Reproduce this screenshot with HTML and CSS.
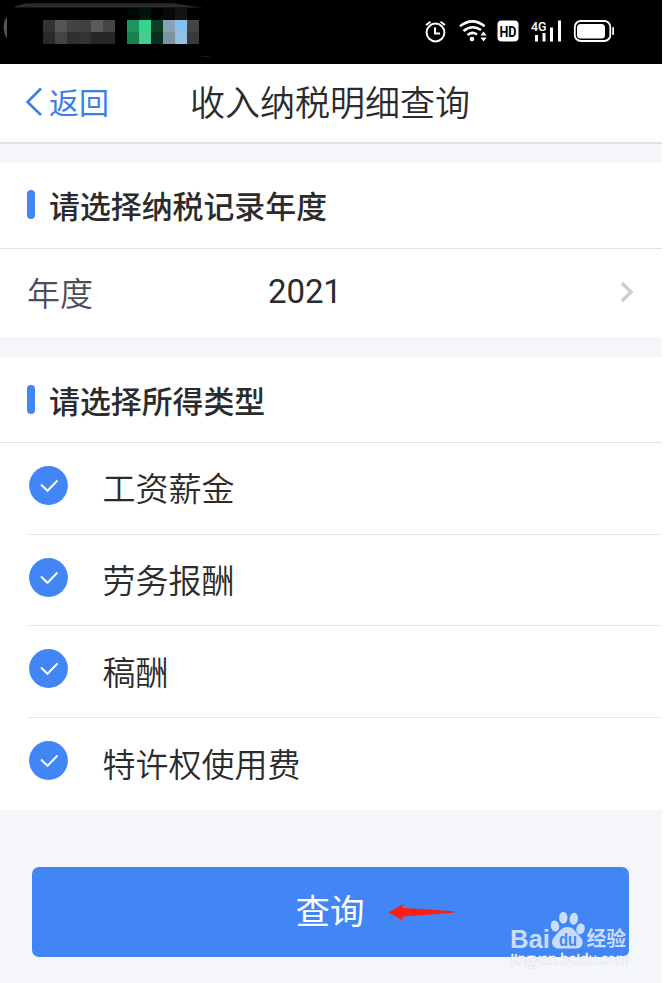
FILE: index.html
```html
<!DOCTYPE html>
<html lang="zh-CN">
<head>
<meta charset="utf-8">
<title>收入纳税明细查询</title>
<link rel="stylesheet" href="styles.css">
</head>
<body>
<div class="screen">
  <header class="status">
    <svg width="662" height="64" viewBox="0 0 662 64">
      <path d="M14 7.5Q20 3.5 29 3.3H174Q188 6 204 7.5Z" fill="#2b2b2b"/>
      <path d="M7 16Q0 27 7 39Z" fill="#555"/>
      <path d="M200 56.5q6-1.5 11 0z" fill="#333"/>
      <g shape-rendering="crispEdges">
        <path d="M43 20h12v12H43z" fill="#333"/><path d="M55 20h12v12H55z" fill="#555"/><path d="M67 20h12v12H67z" fill="#444"/><path d="M79 20h12v12H79z" fill="#404040"/><path d="M91 20h12v12H91z" fill="#5a5a5a"/><path d="M103 20h12v12h-12z" fill="#444"/>
        <path d="M43 32h12v12H43z" fill="#292929"/><path d="M55 32h12v12H55z" fill="#444"/><path d="M67 32h12v12H67z" fill="#303030"/><path d="M79 32h12v12H79z" fill="#333"/><path d="M91 32h24v12H91z" fill="#272727"/>
        <path d="M127 8h12v12h-12z" fill="#000604"/><path d="M139 8h12v12h-12z" fill="#03130c"/><path d="M163 8h12v12h-12z" fill="#090909"/><path d="M175 8h12v12h-12z" fill="#141414"/>
        <path d="M127 20h12v12h-12z" fill="#229263"/><path d="M139 20h12v12h-12z" fill="#37d48b"/><path d="M151 20h12v12h-12z" fill="#0e3d2a"/><path d="M163 20h12v12h-12z" fill="#8aa0b9"/><path d="M175 20h12v12h-12z" fill="#87c0ef"/><path d="M187 20h12v12h-12z" fill="#444"/>
        <path d="M127 32h12v12h-12z" fill="#16834f"/><path d="M139 32h12v12h-12z" fill="#47cb90"/><path d="M151 32h12v12h-12z" fill="#09301f"/><path d="M163 32h12v12h-12z" fill="#8093a2"/><path d="M175 32h12v12h-12z" fill="#91c1e3"/><path d="M187 32h12v12h-12z" fill="#393939"/>
      </g>
      <g fill="none" stroke="#fff">
        <circle cx="435.5" cy="32.5" r="8.900" stroke-width="2"/>
        <path d="M435 27.500v6h5" stroke-width="2"/>
        <path d="M426 25l4.500-3.300M445 25l-4.500-3.300" stroke-width="2"/>
        <path d="M460 26.300Q472.300 16.500 484.700 26.300" stroke-width="2.600"/>
        <path d="M463.500 31Q472.300 24 481 30" stroke-width="2.600"/>
        <path d="M467.500 35Q472 31 477 34.500" stroke-width="2.600"/>
      </g>
      <g fill="#fff">
        <circle cx="472" cy="39" r="2.300"/>
        <path d="M480.500 35.500l3-4 3.200 4zM480.500 37.500l3 4 3.200-4z"/>
        <rect x="497.500" y="20.500" width="21" height="21" rx="4"/>
        <rect x="535" y="35" width="3" height="6.500"/>
        <rect x="542.500" y="33" width="3" height="8.500"/>
        <rect x="550" y="27.500" width="3" height="14"/>
        <rect x="558" y="20.500" width="3" height="21"/>
        <rect x="577" y="24" width="28" height="14.500" rx="3.500"/>
        <rect x="612.300" y="27" width="1.700" height="8" rx="0.800"/>
      </g>
      <rect x="574.800" y="21" width="35.500" height="20" rx="6" fill="none" stroke="#fff" stroke-width="1.800"/>
      <text class="hd" x="508" y="36.500" text-anchor="middle" textLength="17" lengthAdjust="spacingAndGlyphs">HD</text>
      <text class="net" x="531" y="31" textLength="15.500" lengthAdjust="spacingAndGlyphs">4G</text>
    </svg>
  </header>

  <nav class="nav">
    <a class="back">
      <svg width="18" height="30" viewBox="0 0 18 30"><path d="M16 2.500L2.500 16 16 29" fill="none" stroke="#3d7fe8" stroke-width="2.600"/></svg>
      <span>返回</span>
    </a>
    <h1 class="title">收入纳税明细查询</h1>
  </nav>

  <section class="panel">
    <h2 class="head"><span class="bar"></span><span class="text">请选择纳税记录年度</span></h2>
    <div class="year">
      <span class="label">年度</span>
      <span class="value">2021</span>
      <svg class="chevron" width="16" height="22" viewBox="0 0 16 22"><path d="M3 2l9 9-9 9" fill="none" stroke="#cfcfd3" stroke-width="3.600"/></svg>
    </div>
  </section>

  <section class="panel">
    <h2 class="head types"><span class="bar"></span><span class="text">请选择所得类型</span></h2>
    <ul class="list">
      <li><svg class="check" viewBox="0 0 39 39"><circle cx="19.500" cy="19.500" r="19.400"/><path d="M12 18.500l6.500 6.300L28.500 14.500"/></svg><span>工资薪金</span></li>
      <li><svg class="check" viewBox="0 0 39 39"><circle cx="19.500" cy="19.500" r="19.400"/><path d="M12 18.500l6.500 6.300L28.500 14.500"/></svg><span>劳务报酬</span></li>
      <li><svg class="check" viewBox="0 0 39 39"><circle cx="19.500" cy="19.500" r="19.400"/><path d="M12 18.500l6.500 6.300L28.500 14.500"/></svg><span>稿酬</span></li>
      <li><svg class="check" viewBox="0 0 39 39"><circle cx="19.500" cy="19.500" r="19.400"/><path d="M12 18.500l6.500 6.300L28.500 14.500"/></svg><span>特许权使用费</span></li>
    </ul>
  </section>

  <button class="submit">查询</button>

  <svg class="arrow" width="68" height="20" viewBox="0 0 68 20"><path d="M.5 10.300L16 1.800l-2.500 4L65.500 9.200q1 .7 0 1.500L13.500 14.800l2.500 4.500z" fill="#fb1e12"/></svg>

  <svg class="watermark" width="150" height="66" viewBox="0 0 150 66">
    <g fill="#c9dcfc">
      <text class="bai" x="8" y="38" textLength="40" lengthAdjust="spacingAndGlyphs">Bai</text>
      <g transform="translate(-4 0)">
        <ellipse cx="57" cy="16" rx="4.200" ry="5.500" transform="rotate(-12 57 16)"/>
        <ellipse cx="65.300" cy="7.800" rx="4.200" ry="6"/>
        <ellipse cx="75.800" cy="8.800" rx="4.200" ry="6" transform="rotate(8 75.800 8.800)"/>
        <ellipse cx="82.500" cy="18.800" rx="4.200" ry="5.500" transform="rotate(12 82.500 18.800)"/>
        <path d="M69.500 17c6 0 8 5 12 9 6 6 3 12.500-3.500 12.500H61c-7 0-9.500-7-4-12.500 4-4 6.500-9 12.500-9z"/>
      </g>
      <text class="cn" x="84.500" y="36" textLength="39.500" lengthAdjust="spacingAndGlyphs">经验</text>
    </g>
    <text class="du" x="57" y="35.500" textLength="18" lengthAdjust="spacingAndGlyphs">du</text>
    <text class="url" x="8.500" y="54" textLength="118" lengthAdjust="spacingAndGlyphs">jingyan.baidu.com</text>
  </svg>
</div>
</body>
</html>
```
FILE: styles.css
```css
* { box-sizing: border-box; }
body {
  margin: 0;
  background: #fff;
  font-family: "Noto Sans CJK SC", sans-serif;
  color: #2b2b2b;
}
.screen {
  position: relative;
  width: 662px;
  height: 983px;
  background: #f5f6fb;
  overflow: hidden;
}
.status { height: 64px; background: #000; }
.status svg { display: block; }
.hd { font: bold 15px Roboto, sans-serif; fill: #000; }
.net { font: 500 13px Roboto, sans-serif; fill: #fff; }

.nav {
  display: grid;
  grid-template-columns: 190px 1fr;
  align-items: center;
  height: 80px;
  padding-bottom: 4px;
  background: #fff;
  border-bottom: 2px solid #e0e1e4;
}
.back {
  display: flex;
  align-items: center;
  gap: 6px;
  padding-left: 25px;
  font-size: 30px;
  line-height: 40px;
  color: #3d7fe8;
}
.title { margin: 0; font-size: 35px; line-height: 50px; font-weight: 350; }

.panel { margin-top: 19px; background: #fff; }
.panel + .panel { margin-top: 20px; }
.head {
  display: flex;
  align-items: center;
  gap: 14px;
  height: 86px;
  margin: 0;
  padding-left: 27px;
  border-bottom: 1px solid #e2e3e5;
  font-size: 30.900px;
  font-weight: 500;
}
.head .text { padding-bottom: 3px; }
.types .text { padding-bottom: 1px; }
.bar { width: 8px; height: 29px; margin-bottom: 2px; border-radius: 4px; background: #4285f5; }
.types .bar { margin-bottom: 0; }
.year {
  display: grid;
  grid-template-columns: 240px 1fr 16px;
  align-items: center;
  height: 88px;
  padding: 0 27px 3px 28px;
  font-size: 33px;
}
.label { color: #4c4c5a; margin-left: -1px; font-weight: 350; }
.value { font-family: Roboto, sans-serif; font-size: 33px; letter-spacing: -0.100px; }

.list { margin: 0; padding: 0 0 0 27px; list-style: none; }
.list li {
  display: flex;
  align-items: center;
  gap: 35px;
  height: 91.700px;
  padding-left: 2px;
  border-bottom: 1px solid #e8e8ea;
  font-size: 33px;
  font-weight: 350;
}
.list li:last-child { border-bottom: 0; }
.list span { margin-left: -0.500px; padding-bottom: 2px; }
.check { width: 39px; height: 39px; margin-top: -6px; }
.check circle { fill: #4285f5; }
.check path { fill: none; stroke: #fff; stroke-width: 2; }

.submit {
  display: block;
  width: 597px;
  height: 90px;
  margin: 57px 0 0 32px;
  padding: 0 1px 6px 0;
  border: 0;
  border-radius: 7px;
  background: #4285f5;
  color: #fff;
  font: 400 34.500px "Noto Sans CJK SC", sans-serif;
}
.arrow { position: absolute; left: 388px; top: 902px; }
.watermark { position: absolute; left: 502px; top: 910px; }
.bai { font: bold 26px "Liberation Sans", sans-serif; }
.cn { font: bold 20px "Noto Sans CJK SC", sans-serif; }
.du { font: bold 19px "Liberation Sans", sans-serif; fill: #4285f5; }
.url { font: 14px "Open Sans", sans-serif; fill: #fff; stroke: #cfd3dc; stroke-width: 0.800px; paint-order: stroke; }
```
